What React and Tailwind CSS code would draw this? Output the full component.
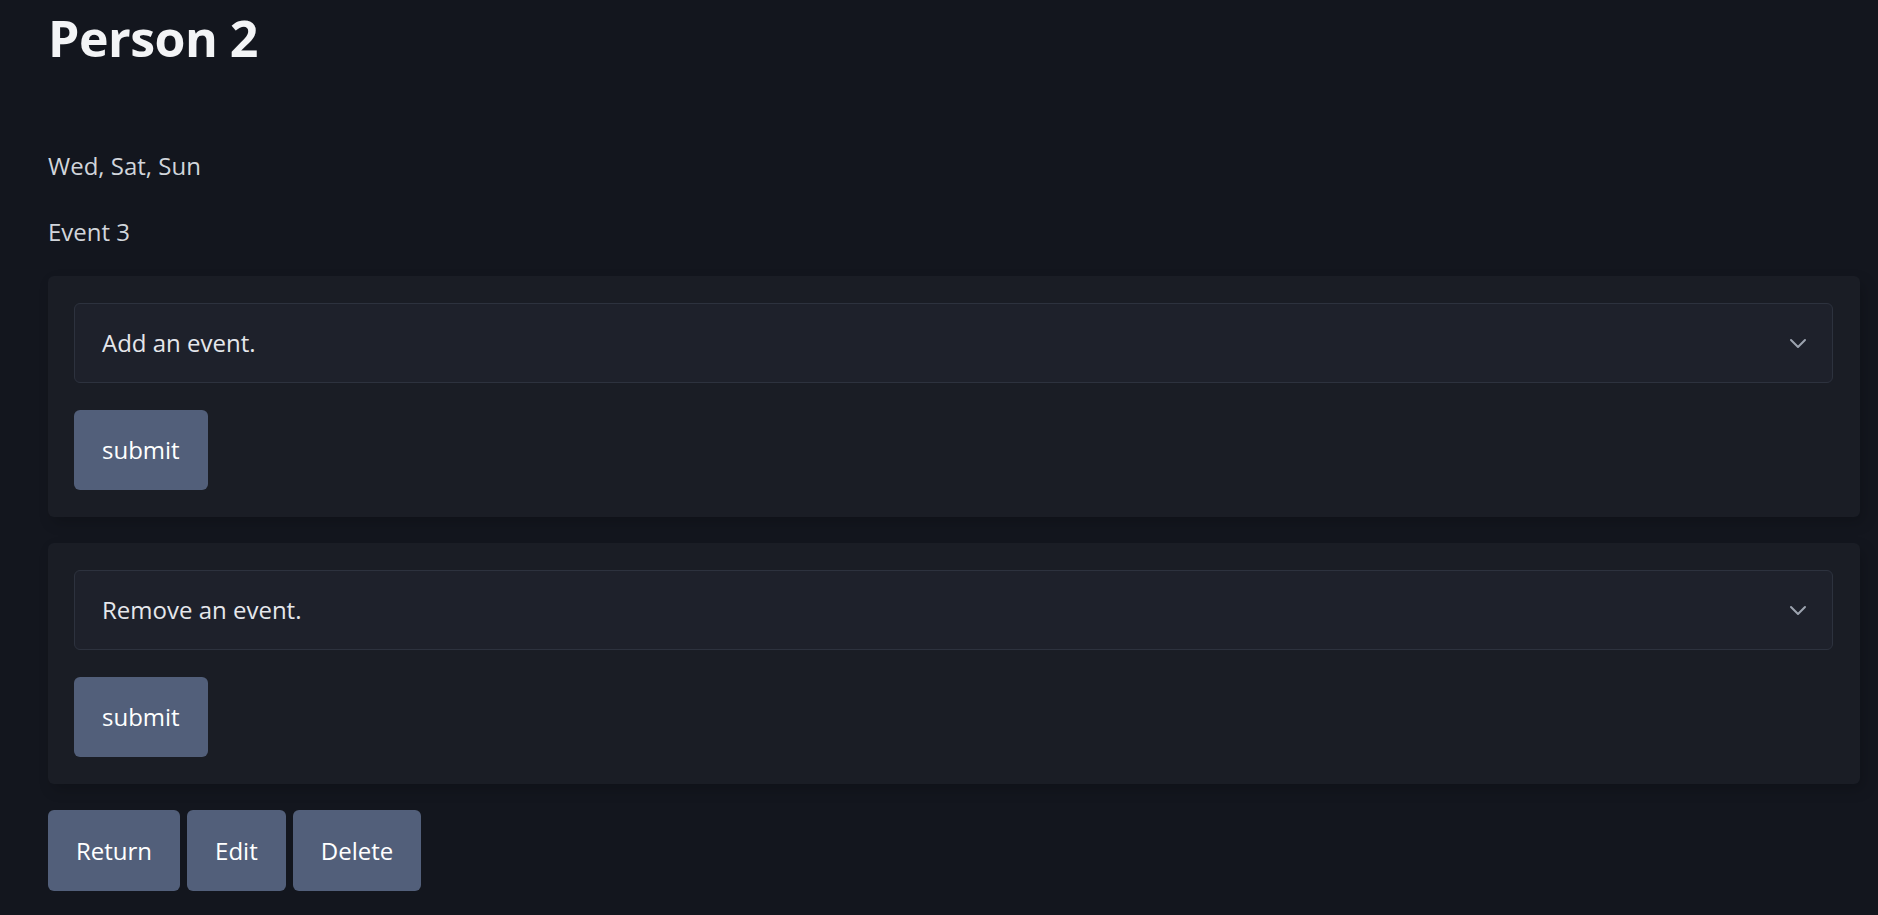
import React from "react";

function Chevron() {
  return (
    <svg width="18" height="11" viewBox="0 0 18 11" fill="none" aria-hidden>
      <path d="M2 2l7 7 7-7" stroke="#9ca3af" strokeWidth="2" strokeLinecap="round" strokeLinejoin="round" />
    </svg>
  );
}

function EventForm({ placeholder }) {
  return (
    <div className="flex flex-col gap-[27px] rounded-md bg-[#1a1d25] p-[27px] pl-[26px] shadow-[4px_6px_14px_rgba(0,0,0,0.18)]">
      <div className="flex h-[80px] items-center justify-between rounded-md border border-[#2d323e] bg-[#1e212b] pl-[27px] pr-[25px] text-[24px] text-[#e5e7eb]">
        <span>{placeholder}</span>
        <Chevron />
      </div>
      <div>
        <button className="h-[80px] rounded-md bg-[#525f7a] px-[28px] text-[24px] text-white">
          submit
        </button>
      </div>
    </div>
  );
}

export default function App() {
  return (
    <div
      className="min-h-screen bg-[#13161e] pl-12 pr-[18px] text-[#d1d5db]"
      style={{ fontFamily: '"Open Sans", "Noto Sans", sans-serif' }}
    >
      <h1 className="pt-2 text-[50px] font-bold leading-[60px] tracking-[-0.5px] text-[#f3f4f6]">
        Person 2
      </h1>
      <p className="mt-[80px] text-[24px] leading-[36px]">Wed, Sat, Sun</p>
      <p className="mt-[30px] text-[24px] leading-[36px]">Event 3</p>

      <div className="mt-[26px] flex flex-col gap-[26px]">
        <EventForm placeholder="Add an event." />
        <EventForm placeholder="Remove an event." />
      </div>

      <div className="mt-[26px] flex gap-[7px] pb-6">
        {["Return", "Edit", "Delete"].map((label) => (
          <button
            key={label}
            className="h-[81px] rounded-md bg-[#525f7a] px-[28px] text-[24px] text-white"
          >
            {label}
          </button>
        ))}
      </div>
    </div>
  );
}
